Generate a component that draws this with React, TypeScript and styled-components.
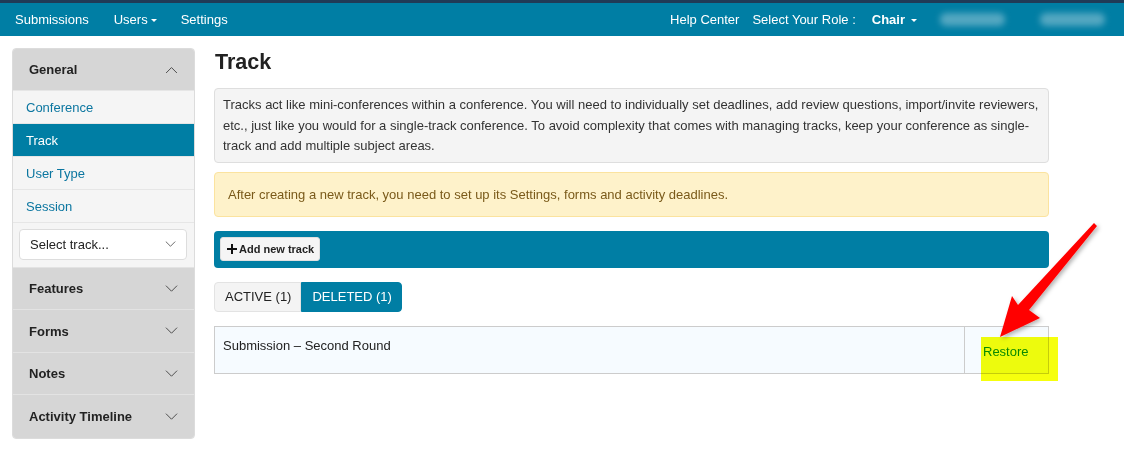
import React from "react";
import styled, { createGlobalStyle } from "styled-components";

const GlobalStyle = createGlobalStyle`
  html, body {
    margin: 0;
    padding: 0;
    background: #ffffff;
  }
  body {
    font-family: "Liberation Sans", Arial, sans-serif;
    font-size: 13px;
    color: #333333;
  }
  * {
    box-sizing: border-box;
  }
`;

const teal = "#007ea4";

const Page = styled.div`
  position: relative;
  width: 1124px;
  height: 471px;
  overflow: hidden;
`;

const NavBar = styled.nav`
  display: flex;
  align-items: center;
  height: 36px;
  border-top: 3px solid #203b57;
  background: ${teal};
  color: #ffffff;
  padding: 0 19px 0 15px;
  font-size: 13px;
`;

const NavGroup = styled.div<{ $gap: number }>`
  display: flex;
  align-items: center;
  gap: ${(p) => p.$gap}px;
`;

const NavLink = styled.span<{ $bold?: boolean }>`
  display: inline-flex;
  align-items: center;
  gap: 6px;
  font-weight: ${(p) => (p.$bold ? 700 : 400)};
  white-space: nowrap;
`;

const Caret = styled.span`
  display: inline-block;
  width: 0;
  height: 0;
  border-left: 3px solid transparent;
  border-right: 3px solid transparent;
  border-top: 3px solid #ffffff;
  margin-top: 1px;
`;

const Blurred = styled.span<{ $w: number }>`
  display: inline-block;
  width: ${(p) => p.$w}px;
  height: 13px;
  border-radius: 6px;
  background: rgba(210, 230, 238, 0.4);
  filter: blur(3px);
`;

const Spacer = styled.div`
  flex: 1;
`;

const Body = styled.div`
  display: flex;
  align-items: flex-start;
  gap: 19px;
  padding: 12px 0 0 12px;
`;

const Sidebar = styled.aside`
  width: 183px;
  border: 1px solid #dcdcdc;
  border-radius: 4px;
  overflow: hidden;
  background: #f5f5f5;
`;

const SectionHeader = styled.div<{ $h: number }>`
  display: flex;
  align-items: center;
  justify-content: space-between;
  height: ${(p) => p.$h}px;
  padding: 0 16px 0 16px;
  background: #d6d6d6;
  border-top: 1px solid #e3e3e3;
  font-weight: 700;
  color: #222222;
  &:first-child {
    border-top: none;
  }
`;

const SideItem = styled.div<{ $active?: boolean }>`
  display: flex;
  align-items: center;
  height: 33px;
  padding: 0 13px;
  border-top: 1px solid #e6e6e6;
  background: ${(p) => (p.$active ? teal : "#f5f5f5")};
  color: ${(p) => (p.$active ? "#ffffff" : "#0b76a0")};
`;

const SelectWrap = styled.div`
  padding: 6px 7px 7px 6px;
  border-top: 1px solid #e6e6e6;
`;

const SelectBox = styled.div`
  display: flex;
  align-items: center;
  justify-content: space-between;
  height: 31px;
  padding: 0 10px 0 10px;
  background: #ffffff;
  border: 1px solid #dddddd;
  border-radius: 4px;
  color: #222222;
`;

const Main = styled.main`
  width: 835px;
`;

const Title = styled.h1`
  margin: 0 0 0 1px;
  height: 40px;
  font-size: 21.5px;
  font-weight: 700;
  color: #222222;
  line-height: 28px;
`;

const InfoBox = styled.div`
  padding: 6px 4px 5px 8px;
  background: #f4f4f4;
  border: 1px solid #dedede;
  border-radius: 4px;
  line-height: 20.5px;
  color: #333333;
`;

const WarnBox = styled.div`
  margin-top: 9px;
  height: 45px;
  display: flex;
  align-items: center;
  padding: 0 13px;
  background: #fef2ca;
  border: 1px solid #fbe39f;
  border-radius: 4px;
  color: #7a5a1a;
`;

const ActionBar = styled.div`
  margin-top: 14px;
  height: 37px;
  display: flex;
  align-items: center;
  padding: 0 6px;
  background: ${teal};
  border-radius: 4px;
`;

const AddButton = styled.button`
  display: inline-flex;
  align-items: center;
  gap: 2px;
  height: 24px;
  padding: 0 5px 0 6px;
  background: #f5f5f5;
  border: 1px solid #e0e0e0;
  border-radius: 3px;
  font-family: inherit;
  font-size: 11px;
  font-weight: 700;
  color: #222222;
`;

const Tabs = styled.div`
  margin-top: 14px;
  display: flex;
`;

const Tab = styled.div<{ $active?: boolean }>`
  display: flex;
  align-items: center;
  height: 30px;
  padding: 0 9px 0 10px;
  font-size: 13px;
  background: ${(p) => (p.$active ? teal : "#f4f4f4")};
  color: ${(p) => (p.$active ? "#ffffff" : "#222222")};
  border: 1px solid ${(p) => (p.$active ? teal : "#e3e3e3")};
  border-radius: ${(p) => (p.$active ? "0 4px 4px 0" : "4px 0 0 4px")};
`;

const Table = styled.div`
  margin-top: 14px;
  display: grid;
  grid-template-columns: 1fr 84px;
  height: 48px;
  background: #f6fbff;
  border: 1px solid #cccccc;
`;

const Cell = styled.div<{ $divider?: boolean; $pad: string }>`
  padding: ${(p) => p.$pad};
  border-left: ${(p) => (p.$divider ? "1px solid #cccccc" : "none")};
  color: #222222;
`;

const Restore = styled.span`
  color: #0a8a0a;
`;

const Highlight = styled.div`
  position: absolute;
  left: 981px;
  top: 337px;
  width: 77px;
  height: 44px;
  background: rgba(245, 255, 0, 0.95);
  mix-blend-mode: multiply;
  pointer-events: none;
`;

const ArrowLayer = styled.svg`
  position: absolute;
  left: 0;
  top: 0;
  pointer-events: none;
`;

const Chevron = ({ up, size = 13 }: { up?: boolean; size?: number }) => (
  <svg width={size} height={size * 0.6} viewBox="0 0 14 8">
    <polyline
      points={up ? "1,7.5 7,1.5 13,7.5" : "1,0.5 7,6.5 13,0.5"}
      fill="none"
      stroke="#444"
      strokeWidth="1"
    />
  </svg>
);

const PlusIcon = () => (
  <svg width="10" height="10" viewBox="0 0 10 10">
    <rect x="4" y="0" width="2" height="10" fill="#111" />
    <rect x="0" y="4" width="10" height="2" fill="#111" />
  </svg>
);

const App = () => {
  return (
    <Page>
      <GlobalStyle />
      <NavBar>
        <NavGroup $gap={26}>
          <NavLink>Submissions</NavLink>
          <NavLink style={{ marginLeft: -1 }}>
            Users <Caret style={{ marginLeft: -3 }} />
          </NavLink>
          <NavLink style={{ marginLeft: -2 }}>Settings</NavLink>
        </NavGroup>
        <Spacer />
        <NavGroup $gap={13}>
          <NavLink>Help Center</NavLink>
          <NavLink>Select Your Role :</NavLink>
          <NavLink $bold style={{ marginLeft: 3 }}>
            Chair <Caret />
          </NavLink>
          <Blurred $w={65} style={{ marginLeft: 10 }} />
          <Blurred $w={65} style={{ marginLeft: 22 }} />
        </NavGroup>
      </NavBar>

      <Body>
        <Sidebar>
          <SectionHeader $h={41}>
            General
            <Chevron up />
          </SectionHeader>
          <SideItem>Conference</SideItem>
          <SideItem $active>Track</SideItem>
          <SideItem>User Type</SideItem>
          <SideItem>Session</SideItem>
          <SelectWrap>
            <SelectBox>
              Select track...
              <Chevron size={11} />
            </SelectBox>
          </SelectWrap>
          <SectionHeader $h={42}>
            Features
            <Chevron />
          </SectionHeader>
          <SectionHeader $h={43}>
            Forms
            <Chevron />
          </SectionHeader>
          <SectionHeader $h={42}>
            Notes
            <Chevron />
          </SectionHeader>
          <SectionHeader $h={44}>
            Activity Timeline
            <Chevron />
          </SectionHeader>
        </Sidebar>

        <Main>
          <Title>Track</Title>
          <InfoBox>
            Tracks act like mini-conferences within a conference. You will need to
            individually set deadlines, add review questions, import/invite reviewers,
            etc., just like you would for a single-track conference. To avoid complexity
            that comes with managing tracks, keep your conference as single-track and add
            multiple subject areas.
          </InfoBox>
          <WarnBox>
            After creating a new track, you need to set up its Settings, forms and
            activity deadlines.
          </WarnBox>
          <ActionBar>
            <AddButton>
              <PlusIcon />
              Add new track
            </AddButton>
          </ActionBar>
          <Tabs>
            <Tab>ACTIVE (1)</Tab>
            <Tab $active>DELETED (1)</Tab>
          </Tabs>
          <Table>
            <Cell $pad="11px 8px">Submission – Second Round</Cell>
            <Cell $divider $pad="17px 0 0 18px">
              <Restore>Restore</Restore>
            </Cell>
          </Table>
        </Main>
      </Body>

      <Highlight />
      <ArrowLayer width="1124" height="471" viewBox="0 0 1124 471">
        <defs>
          <filter id="arrowShadow" x="-20%" y="-20%" width="140%" height="140%">
            <feDropShadow dx="2" dy="2" stdDeviation="2" floodColor="#000" floodOpacity="0.3" />
          </filter>
        </defs>
        <polygon
          points="1094,223 1097,226 1029,310 1040,318 1000,337 1012,296 1018,305"
          fill="#ff0000"
          filter="url(#arrowShadow)"
        />
      </ArrowLayer>
    </Page>
  );
};

export default App;
